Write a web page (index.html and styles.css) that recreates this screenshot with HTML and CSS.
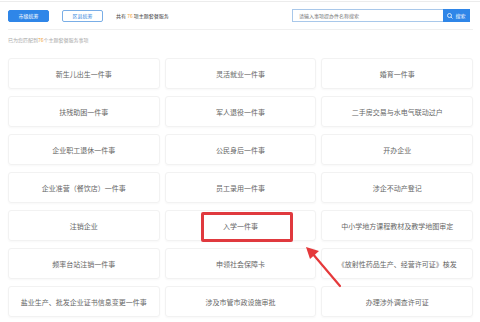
FILE: index.html
```html
<!DOCTYPE html>
<html>
<head>
    <meta charset="UTF-8">
    <meta name="viewport" content="width=device-width, initial-scale=1.0">
    <title>主题套餐服务</title>
    <link rel="stylesheet" href="styles.css">
</head>
<body>
<div class="page">
    <!-- Toolbar: tabs, count and search -->
    <div class="toolbar">
        <a class="tab active" href="#">市级统筹</a>
        <a class="tab" href="#">区县统筹</a>
        <span class="count">共有 <em>76</em> 项主题套餐服务</span>
        <div class="search">
            <input class="search-input" type="text" placeholder="请输入事项提办件名称搜索">
            <button class="search-btn">
                <svg width="6" height="6" viewBox="0 0 12 12"><circle cx="5" cy="5" r="4" fill="none" stroke="#fff" stroke-width="1.5"/><line x1="8" y1="8" x2="11" y2="11" stroke="#fff" stroke-width="1.5"/></svg>
                搜索
            </button>
        </div>
    </div>

    <p class="hint">已为您匹配到<em>76</em>个主题套餐服务事项</p>

    <!-- Service list -->
    <div class="grid">
        <div class="card">新生儿出生一件事</div>
        <div class="card">灵活就业一件事</div>
        <div class="card">婚育一件事</div>
        <div class="card">扶残助困一件事</div>
        <div class="card">军人退役一件事</div>
        <div class="card">二手房交易与水电气联动过户</div>
        <div class="card">企业职工退休一件事</div>
        <div class="card">公民身后一件事</div>
        <div class="card">开办企业</div>
        <div class="card">企业准营（餐饮店）一件事</div>
        <div class="card">员工录用一件事</div>
        <div class="card">涉企不动产登记</div>
        <div class="card">注销企业</div>
        <div class="card">入学一件事<span class="mark"></span></div>
        <div class="card">中小学地方课程教材及教学地图审定</div>
        <div class="card">频率台站注销一件事</div>
        <div class="card">申领社会保障卡</div>
        <div class="card">《放射性药品生产、经营许可证》核发</div>
        <div class="card">盐业生产、批发企业证书信息变更一件事</div>
        <div class="card">涉及市管市政设施审批</div>
        <div class="card">办理涉外调查许可证</div>
    </div>

    <!-- Annotation arrow -->
    <svg class="arrow" width="50" height="50" viewBox="0 0 50 50">
        <line x1="40" y1="42" x2="12" y2="9" stroke="#e5393b" stroke-width="2.2" stroke-linecap="round"/>
        <polygon points="6,3 19,7 10,15" fill="#e5393b"/>
    </svg>
</div>
</body>
</html>
```

FILE: styles.css
```css
html, body {
    margin: 0;
    height: 100%;
    overflow: hidden;
    background: #fff;
}

body {
    font-family: "Noto Sans CJK SC", "Microsoft YaHei", sans-serif;
    color: #555;
}

.page {
    position: relative;
    margin-top: 1px;
    border-top: 1px solid #ececec;
    padding: 0 7px 0 8px;
}

/* Top toolbar */
.toolbar {
    display: flex;
    align-items: center;
    height: 13px;
    margin-top: 7px;
    padding-bottom: 7px;
    border-bottom: 1px solid #f0f0f0;
}

.tab {
    display: flex;
    align-items: center;
    justify-content: center;
    box-sizing: border-box;
    width: 41px;
    height: 12px;
    margin-right: 13px;
    border: 1px solid #7aaee6;
    border-radius: 2px;
    font-size: 5px;
    color: #3b8ae0;
    text-decoration: none;
}

.tab.active {
    background-color: #2f86e8;
    border-color: #2f86e8;
    color: #fff;
}

.count {
    font-size: 5px;
    color: #444;
}

em {
    font-style: normal;
    color: #f0a030;
}

.search {
    display: flex;
    margin-left: auto;
    margin-right: 3px;
}

.search-input {
    box-sizing: border-box;
    width: 151px;
    height: 13px;
    margin: 0;
    padding: 0 6px;
    border: 1px solid #a9c8ea;
    border-right: none;
    font-family: inherit;
    font-size: 5px;
    outline: none;
}

.search-input::placeholder {
    color: #777;
}

.search-btn {
    display: flex;
    align-items: center;
    justify-content: center;
    gap: 2px;
    width: 27px;
    height: 13px;
    margin: 0;
    padding: 0;
    border: none;
    background-color: #2f86e8;
    color: #fff;
    font-family: inherit;
    font-size: 5px;
}

.hint {
    margin: 0;
    height: 20px;
    line-height: 20px;
    font-size: 5px;
    color: #aaa;
}

/* Service cards */
.grid {
    display: grid;
    grid-template-columns: repeat(3, 1fr);
    grid-auto-rows: 31px;
    gap: 7px 5px;
    margin-top: 8px;
}

.card {
    position: relative;
    display: flex;
    align-items: center;
    justify-content: center;
    border: 1px solid #f2f2f2;
    border-radius: 3px;
    box-shadow: 0 1px 2px rgba(0, 0, 0, 0.03);
    font-size: 7px;
    color: #666;
}

/* Red highlight box over a card */
.mark {
    position: absolute;
    left: 35px;
    top: 1px;
    width: 86px;
    height: 24px;
    border: 3px solid #e0393e;
    border-radius: 2px;
}

.arrow {
    position: absolute;
    left: 300px;
    top: 242px;
}
```
